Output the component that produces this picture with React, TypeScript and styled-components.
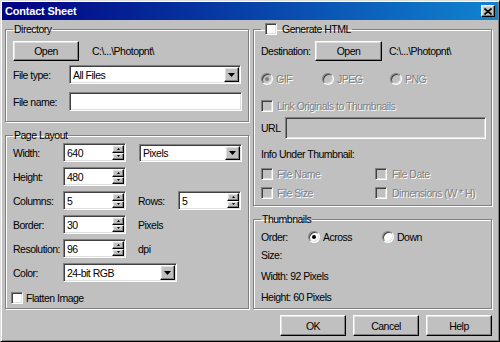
import React from "react";
import styled, { createGlobalStyle, css } from "styled-components";

const GlobalStyle = createGlobalStyle`
  *, *::before, *::after { box-sizing: border-box; }
  html, body { margin: 0; padding: 0; background: #c0c0c0; }
  body {
    width: 500px;
    height: 342px;
    overflow: hidden;
    font-family: "Liberation Sans", Arial, sans-serif;
    font-size: 10.5px;
    letter-spacing: -0.5px;
    line-height: 12px;
    color: #000;
  }
  fieldset, legend, button { font: inherit; letter-spacing: inherit; }
`;

const raised = css`
  border: 1px solid;
  border-color: #fff #000 #000 #fff;
  box-shadow: inset -1px -1px #808080, inset 1px 1px #dfdfdf;
  background: #c0c0c0;
`;

const sunken = css`
  border: 1px solid;
  border-color: #808080 #fff #fff #808080;
  box-shadow: inset 1px 1px #404040, inset -1px -1px #dfdfdf;
`;

const Window = styled.div`
  width: 500px;
  height: 342px;
  display: flex;
  flex-direction: column;
  padding: 1px;
  background: #c0c0c0;
  border: 1px solid;
  border-color: #dfdfdf #000 #000 #dfdfdf;
  box-shadow: inset 1px 1px #fff, inset -1px -1px #808080;
`;

const TitleBar = styled.div`
  flex: none;
  height: 18px;
  display: flex;
  align-items: center;
  justify-content: space-between;
  padding: 0 3px;
  background: linear-gradient(to right, #000080, #1084d0);
`;

const Title = styled.span`
  color: #fff;
  font-weight: bold;
  font-size: 11px;
  letter-spacing: -0.2px;
`;

const CloseBtn = styled.span`
  ${raised};
  width: 14px;
  height: 12px;
  display: flex;
  align-items: center;
  justify-content: center;
`;

const Body = styled.div`
  flex: 1;
  display: grid;
  grid-template-columns: 244px 239px;
  column-gap: 4px;
  align-items: start;
  padding: 3px 6px 0 3px;
`;

const Column = styled.div`
  display: flex;
  flex-direction: column;
`;

const Group = styled.fieldset<{ $h: number; $mt?: number }>`
  margin: ${(p) => p.$mt ?? 0}px 0 0 0;
  min-width: 0;
  height: ${(p) => p.$h}px;
  padding: 0 6px 0 7px;
  border: 1px solid #808080;
  box-shadow: inset 1px 1px #fff, 1px 1px #fff;
  display: flex;
  flex-direction: column;
`;

const Legend = styled.legend`
  padding: 0 1px;
  line-height: 12px;
  height: 12px;
  display: flex;
  align-items: center;
  white-space: nowrap;
`;

const Row = styled.div<{ $mt?: number; $h?: number }>`
  flex: none;
  display: flex;
  align-items: center;
  height: ${(p) => p.$h ?? 12}px;
  margin-top: ${(p) => p.$mt ?? 0}px;
  white-space: nowrap;
`;

const Label = styled.span<{ $w?: number; $dis?: boolean }>`
  flex: none;
  width: ${(p) => (p.$w ? `${p.$w}px` : "auto")};
  ${(p) =>
    p.$dis &&
    css`
      color: #808080;
      text-shadow: 1px 1px 0 #fff;
    `}
`;

const Spacer = styled.span<{ $w: number }>`
  flex: none;
  width: ${(p) => p.$w}px;
`;

const Button = styled.span<{ $w: number; $h?: number }>`
  ${raised};
  flex: none;
  width: ${(p) => p.$w}px;
  height: ${(p) => p.$h ?? 20}px;
  display: flex;
  align-items: center;
  justify-content: center;
`;

const Field = styled.span<{ $w: number; $h?: number; $dis?: boolean }>`
  ${sunken};
  flex: none;
  width: ${(p) => p.$w}px;
  height: ${(p) => p.$h ?? 19}px;
  padding: 1px;
  display: flex;
  align-items: stretch;
  background: ${(p) => (p.$dis ? "#c0c0c0" : "#fff")};
`;

const FieldText = styled.span`
  flex: 1;
  display: flex;
  align-items: center;
  padding-left: 2px;
`;

const DropBtn = styled.span`
  ${raised};
  flex: none;
  width: 15px;
  display: flex;
  align-items: center;
  justify-content: center;
`;

const SpinCol = styled.span`
  flex: none;
  width: 12px;
  display: flex;
  flex-direction: column;
`;

const SpinBtn = styled.span`
  ${raised};
  flex: 1;
  display: flex;
  align-items: center;
  justify-content: center;
`;

const Check = styled.span<{ $dis?: boolean; $ml?: number }>`
  ${sunken};
  flex: none;
  width: 12px;
  height: 12px;
  margin-left: ${(p) => p.$ml ?? 0}px;
  background: ${(p) => (p.$dis ? "#c0c0c0" : "#fff")};
`;

const Radio = styled.span<{ $dis?: boolean; $on?: boolean }>`
  flex: none;
  width: 12px;
  height: 12px;
  border-radius: 50%;
  border: 1px solid;
  border-color: #808080 #fff #fff #808080;
  box-shadow: inset 1px 1px #404040, inset -1px -1px #dfdfdf;
  background: ${(p) => (p.$dis ? "#c0c0c0" : "#fff")};
  display: flex;
  align-items: center;
  justify-content: center;
  &::after {
    content: "";
    width: 4px;
    height: 4px;
    border-radius: 50%;
    background: ${(p) => (p.$dis ? "#808080" : "#000")};
    display: ${(p) => (p.$on ? "block" : "none")};
  }
`;

const Item = styled.span<{ $w?: number; $gap?: number }>`
  flex: none;
  display: flex;
  align-items: center;
  gap: ${(p) => p.$gap ?? 3}px;
  width: ${(p) => (p.$w ? `${p.$w}px` : "auto")};
`;

const ButtonRow = styled.div`
  display: flex;
  justify-content: flex-end;
  gap: 7px;
  margin-top: 6px;
`;

const DownArrow = () => (
  <svg width="7" height="4" viewBox="0 0 7 4">
    <polygon points="0,0 7,0 3.5,4" fill="#000" />
  </svg>
);

const TinyArrow = ({ up }: { up?: boolean }) => (
  <svg width="3" height="2" viewBox="0 0 3 2">
    <polygon points={up ? "1.5,0 3,2 0,2" : "0,0 3,0 1.5,2"} fill="#000" />
  </svg>
);

const Select = ({ w, h, value }: { w: number; h?: number; value: string }) => (
  <Field $w={w} $h={h}>
    <FieldText>{value}</FieldText>
    <DropBtn>
      <DownArrow />
    </DropBtn>
  </Field>
);

const Spinner = ({ value }: { value: string }) => (
  <Field $w={63}>
    <FieldText>{value}</FieldText>
    <SpinCol>
      <SpinBtn>
        <TinyArrow up />
      </SpinBtn>
      <SpinBtn>
        <TinyArrow />
      </SpinBtn>
    </SpinCol>
  </Field>
);

const PATH = "C:\\...\\Photopnt\\";

export default function App() {
  return (
    <>
      <GlobalStyle />
      <Window>
        <TitleBar>
          <Title>Contact Sheet</Title>
          <CloseBtn>
            <svg width="8" height="7" viewBox="0 0 8 7">
              <path d="M0.5 0.5 L7.5 6.5 M7.5 0.5 L0.5 6.5" stroke="#000" strokeWidth="1.6" />
            </svg>
          </CloseBtn>
        </TitleBar>
        <Body>
          <Column>
            <Group $h={99}>
              <Legend>Directory</Legend>
              <Row $mt={6} $h={20}>
                <Button $w={66}>Open</Button>
                <Spacer $w={13} />
                <Label>{PATH}</Label>
              </Row>
              <Row $mt={4} $h={19}>
                <Label $w={56}>File type:</Label>
                <Select w={172} value="All Files" />
              </Row>
              <Row $mt={8} $h={19}>
                <Label $w={56}>File name:</Label>
                <Field $w={173} />
              </Row>
            </Group>
            <Group $h={180} $mt={7}>
              <Legend>Page Layout</Legend>
              <Row $mt={2} $h={19}>
                <Label $w={50}>Width:</Label>
                <Spinner value="640" />
                <Spacer $w={13} />
                <Select w={103} h={18} value="Pixels" />
              </Row>
              <Row $mt={5} $h={19}>
                <Label $w={50}>Height:</Label>
                <Spinner value="480" />
              </Row>
              <Row $mt={5} $h={19}>
                <Label $w={50}>Columns:</Label>
                <Spinner value="5" />
                <Spacer $w={12} />
                <Label $w={40}>Rows:</Label>
                <Spinner value="5" />
              </Row>
              <Row $mt={5} $h={19}>
                <Label $w={50}>Border:</Label>
                <Spinner value="30" />
                <Spacer $w={12} />
                <Label>Pixels</Label>
              </Row>
              <Row $mt={5} $h={19}>
                <Label $w={50}>Resolution:</Label>
                <Spinner value="96" />
                <Spacer $w={12} />
                <Label>dpi</Label>
              </Row>
              <Row $mt={5} $h={19}>
                <Label $w={50}>Color:</Label>
                <Select w={114} value="24-bit RGB" />
              </Row>
              <Row $mt={10}>
                <Item $gap={3}>
                  <Check $ml={-2} />
                  <Label>Flatten Image</Label>
                </Item>
              </Row>
            </Group>
          </Column>
          <Column>
            <Group $h={183}>
              <Legend>
                <Item $gap={5}>
                  <Check $ml={3} />
                  <Label>Generate HTML</Label>
                </Item>
              </Legend>
              <Row $mt={6} $h={20}>
                <Label $w={54}>Destination:</Label>
                <Button $w={67}>Open</Button>
                <Spacer $w={7} />
                <Label>{PATH}</Label>
              </Row>
              <Row $mt={12}>
                <Item $w={61}>
                  <Radio $dis $on />
                  <Label $dis>GIF</Label>
                </Item>
                <Item $w={68}>
                  <Radio $dis />
                  <Label $dis>JPEG</Label>
                </Item>
                <Item>
                  <Radio $dis />
                  <Label $dis>PNG</Label>
                </Item>
              </Row>
              <Row $mt={15}>
                <Item $gap={4}>
                  <Check $dis />
                  <Label $dis>Link Originals to Thumbnails</Label>
                </Item>
              </Row>
              <Row $mt={5} $h={22}>
                <Label $w={24}>URL</Label>
                <Field $w={201} $h={22} $dis />
              </Row>
              <Row $mt={9}>
                <Label>Info Under Thumbnail:</Label>
              </Row>
              <Row $mt={8}>
                <Item $w={114} $gap={4}>
                  <Check $dis />
                  <Label $dis>File Name</Label>
                </Item>
                <Item $gap={5}>
                  <Check $dis />
                  <Label $dis>File Date</Label>
                </Item>
              </Row>
              <Row $mt={7}>
                <Item $w={114} $gap={4}>
                  <Check $dis />
                  <Label $dis>File Size</Label>
                </Item>
                <Item $gap={5}>
                  <Check $dis />
                  <Label $dis>Dimensions (W * H)</Label>
                </Item>
              </Row>
            </Group>
            <Group $h={96} $mt={7}>
              <Legend>Thumbnails</Legend>
              <Row $mt={6}>
                <Label $w={47}>Order:</Label>
                <Item $w={74}>
                  <Radio $on />
                  <Label>Across</Label>
                </Item>
                <Item>
                  <Radio />
                  <Label>Down</Label>
                </Item>
              </Row>
              <Row $mt={6}>
                <Label>Size:</Label>
              </Row>
              <Row $mt={9}>
                <Label>Width: 92 Pixels</Label>
              </Row>
              <Row $mt={9}>
                <Label>Height: 60 Pixels</Label>
              </Row>
            </Group>
            <ButtonRow>
              <Button $w={66} $h={21}>OK</Button>
              <Button $w={66} $h={21}>Cancel</Button>
              <Button $w={66} $h={21}>Help</Button>
            </ButtonRow>
          </Column>
        </Body>
      </Window>
    </>
  );
}
